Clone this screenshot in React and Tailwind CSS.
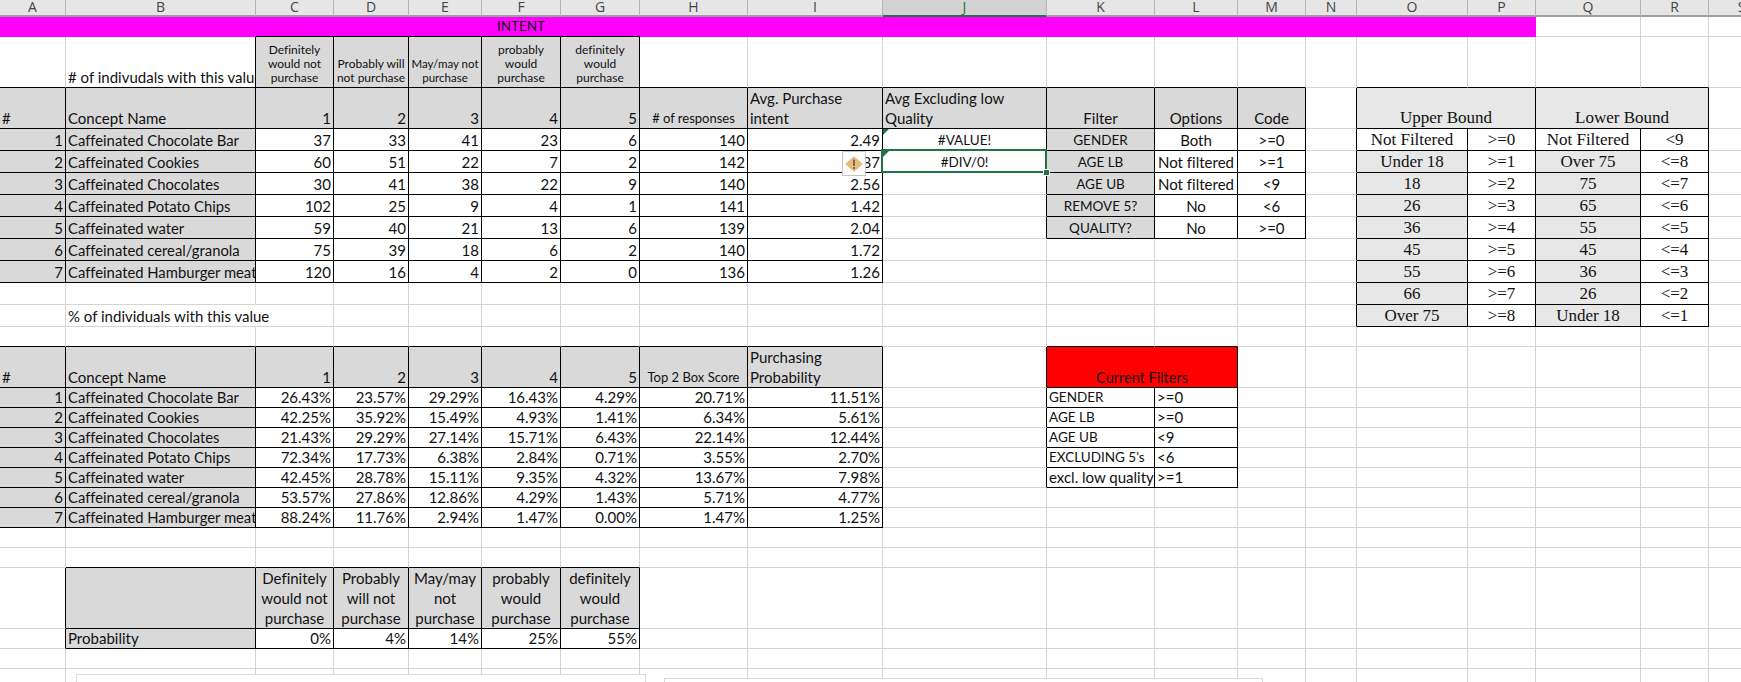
import React from 'react';

const COLS = ['A','B','C','D','E','F','G','H','I','J','K','L','M','N','O','P','Q','R','S'];

const COL_WIDTHS = [
  'w-[66px]','w-[190px]','w-[78px]','w-[75px]','w-[73px]','w-[79px]','w-[79px]','w-[108px]','w-[135px]','w-[164px]',
  'w-[108px]','w-[83px]','w-[68px]','w-[51px]','w-[111px]','w-[68px]','w-[105px]','w-[68px]','w-[66px]',
];

const GRAY = 'bg-[#d9d9d9]';
const LIGHT = 'bg-[#e7e7e7]';
const CAPS = 'text-[13.5px]';
const NAME = 'text-[14.8px]';

const gray = (text, cls = '', wrap = false) => ({ text, box: true, bg: GRAY, cls, wrap });
const right = (text) => ({ text, box: true, cls: 'text-right' });
const center = (text, bg = '', cls = '') => ({ text, box: true, bg, cls: `text-center ${cls}` });
const serif = (text, bg = '') => ({
  text, box: true, bg,
  cls: "text-center font-['Liberation_Serif',serif] text-[17px]",
});

const CONCEPTS = [
  'Caffeinated Chocolate Bar',
  'Caffeinated Cookies',
  'Caffeinated Chocolates',
  'Caffeinated Potato Chips',
  'Caffeinated water',
  'Caffeinated cereal/granola',
  'Caffeinated Hamburger meat',
];

const COUNTS = [
  ['37','33','41','23','6','140','2.49'],
  ['60','51','22','7','2','142','1.87'],
  ['30','41','38','22','9','140','2.56'],
  ['102','25','9','4','1','141','1.42'],
  ['59','40','21','13','6','139','2.04'],
  ['75','39','18','6','2','140','1.72'],
  ['120','16','4','2','0','136','1.26'],
];

const PERCENTS = [
  ['26.43%','23.57%','29.29%','16.43%','4.29%','20.71%','11.51%'],
  ['42.25%','35.92%','15.49%','4.93%','1.41%','6.34%','5.61%'],
  ['21.43%','29.29%','27.14%','15.71%','6.43%','22.14%','12.44%'],
  ['72.34%','17.73%','6.38%','2.84%','0.71%','3.55%','2.70%'],
  ['42.45%','28.78%','15.11%','9.35%','4.32%','13.67%','7.98%'],
  ['53.57%','27.86%','12.86%','4.29%','1.43%','5.71%','4.77%'],
  ['88.24%','11.76%','2.94%','1.47%','0.00%','1.47%','1.25%'],
];

const FILTERS = [
  ['GENDER','Both','>=0'],
  ['AGE LB','Not filtered','>=1'],
  ['AGE UB','Not filtered','<9'],
  ['REMOVE 5?','No','<6'],
  ['QUALITY?','No','>=0'],
];

const BOUNDS = [
  ['Not Filtered','>=0','Not Filtered','<9'],
  ['Under 18','>=1','Over 75','<=8'],
  ['18','>=2','75','<=7'],
  ['26','>=3','65','<=6'],
  ['36','>=4','55','<=5'],
  ['45','>=5','45','<=4'],
  ['55','>=6','36','<=3'],
  ['66','>=7','26','<=2'],
  ['Over 75','>=8','Under 18','<=1'],
];

const CURRENT = [
  ['GENDER','>=0'],
  ['AGE LB','>=0'],
  ['AGE UB','<9'],
  ["EXCLUDING 5's",'<6'],
  ['excl. low quality','>=1'],
];

const boundCells = (i) => {
  const b = BOUNDS[i];
  const bg = i === 0 ? '' : LIGHT;
  return { O: serif(b[0], bg), P: serif(b[1]), Q: serif(b[2], bg), R: serif(b[3]) };
};

const filterCells = (i) => {
  const f = FILTERS[i];
  return { K: center(f[0], GRAY, CAPS), L: center(f[1]), M: center(f[2]) };
};

const SMALL = 'text-center text-[12px] leading-[14px] pb-[2px]';
const WRAP = 'text-center leading-[20px]';

const rows = [
  // magenta title bar
  { h: 'h-[20px]', magenta: true, cells: { F: { text: 'INTENT', cls: 'text-center text-[13.5px]' } } },
  {
    h: 'h-[51px]',
    cells: {
      B: { text: '# of indivudals with this value' },
      C: gray('Definitely would not purchase', SMALL, true),
      D: gray('Probably will not purchase', SMALL, true),
      E: gray('May/may not purchase', 'text-center text-[11.5px] leading-[14px] pb-[2px]', true),
      F: gray('probably would purchase', SMALL, true),
      G: gray('definitely would purchase', SMALL, true),
    },
  },
  {
    h: 'h-[41px]',
    cells: {
      A: gray('#'),
      B: gray('Concept Name'),
      C: gray('1', 'text-right'),
      D: gray('2', 'text-right'),
      E: gray('3', 'text-right'),
      F: gray('4', 'text-right'),
      G: gray('5', 'text-right'),
      H: gray('# of responses', 'text-center text-[13px]'),
      I: gray('Avg. Purchase intent', 'leading-[20px]', true),
      J: gray('Avg Excluding low Quality', 'leading-[20px]', true),
      K: gray('Filter', 'text-center'),
      L: gray('Options', 'text-center'),
      M: gray('Code', 'text-center'),
      O: { ...serif('Upper Bound', LIGHT), span: 2 },
      Q: { ...serif('Lower Bound', LIGHT), span: 2 },
    },
  },
];

COUNTS.forEach((row, i) => {
  const cells = {
    A: gray(String(i + 1), 'text-right'),
    B: gray(CONCEPTS[i], NAME),
    ...boundCells(i),
  };
  row.forEach((v, j) => { cells[COLS[j + 2]] = right(v); });
  if (i < 5) Object.assign(cells, filterCells(i));
  if (i === 0) cells.J = { ...center('#VALUE!', '', CAPS), flag: true };
  if (i === 1) cells.J = { ...center('#DIV/0!', '', CAPS), flag: true, selected: true };
  rows.push({ h: 'h-[22px]', cells });
});

rows.push({ h: 'h-[22px]', cells: boundCells(7) });
rows.push({
  h: 'h-[22px]',
  cells: { B: { text: '% of individuals with this value', bare: true }, ...boundCells(8) },
});
rows.push({ h: 'h-[20px]', cells: {} });
rows.push({
  h: 'h-[41px]',
  cells: {
    A: gray('#'),
    B: gray('Concept Name'),
    C: gray('1', 'text-right'),
    D: gray('2', 'text-right'),
    E: gray('3', 'text-right'),
    F: gray('4', 'text-right'),
    G: gray('5', 'text-right'),
    H: gray('Top 2 Box Score', 'text-center text-[13px]'),
    I: gray('Purchasing Probability', 'leading-[20px]', true),
    K: { text: 'Current Filters', box: true, bg: 'bg-[#ff0000]', span: 2, wrap: true, cls: 'text-center text-[14.5px]' },
  },
});

PERCENTS.forEach((row, i) => {
  const cells = { A: gray(String(i + 1), 'text-right'), B: gray(CONCEPTS[i], NAME) };
  row.forEach((v, j) => { cells[COLS[j + 2]] = right(v); });
  if (i < 5) {
    cells.K = { text: CURRENT[i][0], box: true, cls: i < 4 ? CAPS : '' };
    cells.L = { text: CURRENT[i][1], box: true };
  }
  rows.push({ h: 'h-[20px]', cells });
});

rows.push({ h: 'h-[20px]', cells: {} });
rows.push({ h: 'h-[20px]', cells: {} });

rows.push({
  h: 'h-[61px]',
  cells: {
    B: gray(''),
    C: gray('Definitely would not purchase', WRAP, true),
    D: gray('Probably will not purchase', WRAP, true),
    E: gray('May/may not purchase', WRAP, true),
    F: gray('probably would purchase', WRAP, true),
    G: gray('definitely would purchase', WRAP, true),
  },
});
rows.push({
  h: 'h-[20px]',
  cells: {
    B: gray('Probability'),
    C: right('0%'), D: right('4%'), E: right('14%'), F: right('25%'), G: right('55%'),
  },
});
rows.push({ h: 'h-[20px]', cells: {} });
rows.push({ h: 'h-[20px]', cells: {} });

const cellAt = (r, c) => {
  const row = rows[r];
  if (!row) return null;
  const direct = row.cells[COLS[c]];
  if (direct) return direct;
  const prev = row.cells[COLS[c - 1]];
  return prev && prev.span === 2 ? prev : null;
};

function Cell({ r, c, cell }) {
  const row = rows[r];
  const last = c + (cell?.span === 2 ? 1 : 0);
  const boxed = cell?.box;
  const magenta = row.magenta && c <= 15;

  const blackRight = boxed || cellAt(r, last + 1)?.box;
  const blackBottom = boxed || cellAt(r + 1, c)?.box;

  let rightColor = 'border-r-[#d4d4d4]';
  if (blackRight) rightColor = 'border-r-black';
  else if (magenta || cell?.bare) rightColor = 'border-r-transparent';

  let bottomColor = 'border-b-[#d4d4d4]';
  if (blackBottom) bottomColor = 'border-b-black';
  else if (magenta) bottomColor = 'border-b-transparent';

  const clip = cell?.bare || cell?.selected ? 'overflow-visible' : 'overflow-hidden';
  const wrap = cell?.wrap ? 'whitespace-normal' : 'whitespace-nowrap pb-[1px]';

  return (
    <td
      colSpan={cell?.span}
      className={`relative p-0 px-[2px] align-bottom border-r border-b ${wrap} ${rightColor} ${bottomColor} ${clip} ${magenta ? 'bg-[#ff00ff]' : ''} ${cell?.bg || ''} ${cell?.cls || ''}`}
    >
      {cell?.text}
      {cell?.flag && (
        <span className="absolute left-0 top-0 w-0 h-0 border-t-[6px] border-r-[6px] border-t-[#217346] border-r-transparent" />
      )}
      {cell?.selected && (
        <span className="absolute left-[-2px] top-[-2px] right-[-1px] bottom-[-1px] border-2 border-[#217346]" />
      )}
    </td>
  );
}

function WarningIcon() {
  return (
    <div className="absolute left-[842px] top-[151px] w-[24px] h-[25px] pl-[2px] bg-white border border-[#c6c6c6] flex items-center">
      <svg width="18" height="16" viewBox="0 0 18 16">
        <path d="M9 1.5 L16.5 8 L9 14.5 L1.5 8 Z" fill="#e9bd7f" stroke="#e9bd7f" strokeWidth="2" strokeLinejoin="round" />
        <rect x="8" y="3.5" width="2" height="6.5" fill="#766a58" />
        <rect x="8" y="11" width="2" height="2" fill="#766a58" />
      </svg>
    </div>
  );
}

export default function App() {
  return (
    <div className="relative w-[1741px] h-[682px] overflow-hidden bg-white text-[#111] text-[15px] leading-[18px] font-['Lato',sans-serif] [font-variant-ligatures:none]">
      <table className="table-fixed w-[1775px] border-separate border-spacing-0">
        <colgroup>
          {COL_WIDTHS.map((w, i) => <col key={i} className={w} />)}
        </colgroup>
        <thead>
          <tr className="h-[17px]">
            {COLS.map((c) => (
              <th
                key={c}
                className={
                  c === 'J'
                    ? "p-0 font-normal text-center text-[14px] leading-[13px] align-top font-['Open_Sans',sans-serif] text-[#217346] bg-[#d2d2d2] border-r border-r-[#b5b5b5] border-b-2 border-b-[#217346]"
                    : "p-0 font-normal text-center text-[14px] leading-[13px] align-top font-['Open_Sans',sans-serif] text-[#444] bg-[#e6e6e6] border-r border-r-[#b5b5b5] border-b-2 border-b-[#9e9e9e]"
                }
              >
                {c}
              </th>
            ))}
          </tr>
        </thead>
        <tbody>
          {rows.map((row, r) => (
            <tr key={r} className={row.h}>
              {COLS.map((c, i) => {
                const prev = row.cells[COLS[i - 1]];
                if (prev && prev.span === 2) return null;
                return <Cell key={c} r={r} c={i} cell={row.cells[c]} />;
              })}
            </tr>
          ))}
        </tbody>
      </table>

      <WarningIcon />
      <span className="absolute left-[1043px] top-[169px] w-[7px] h-[7px] bg-[#217346] border border-white" />

      {/* embedded charts, only their top edge is in view */}
      <div className="absolute left-[76px] top-[674px] w-[570px] h-[40px] bg-white border border-[#d9d9d9]" />
      <div className="absolute left-[664px] top-[678px] w-[599px] h-[40px] bg-white border border-[#d9d9d9]" />
    </div>
  );
}
